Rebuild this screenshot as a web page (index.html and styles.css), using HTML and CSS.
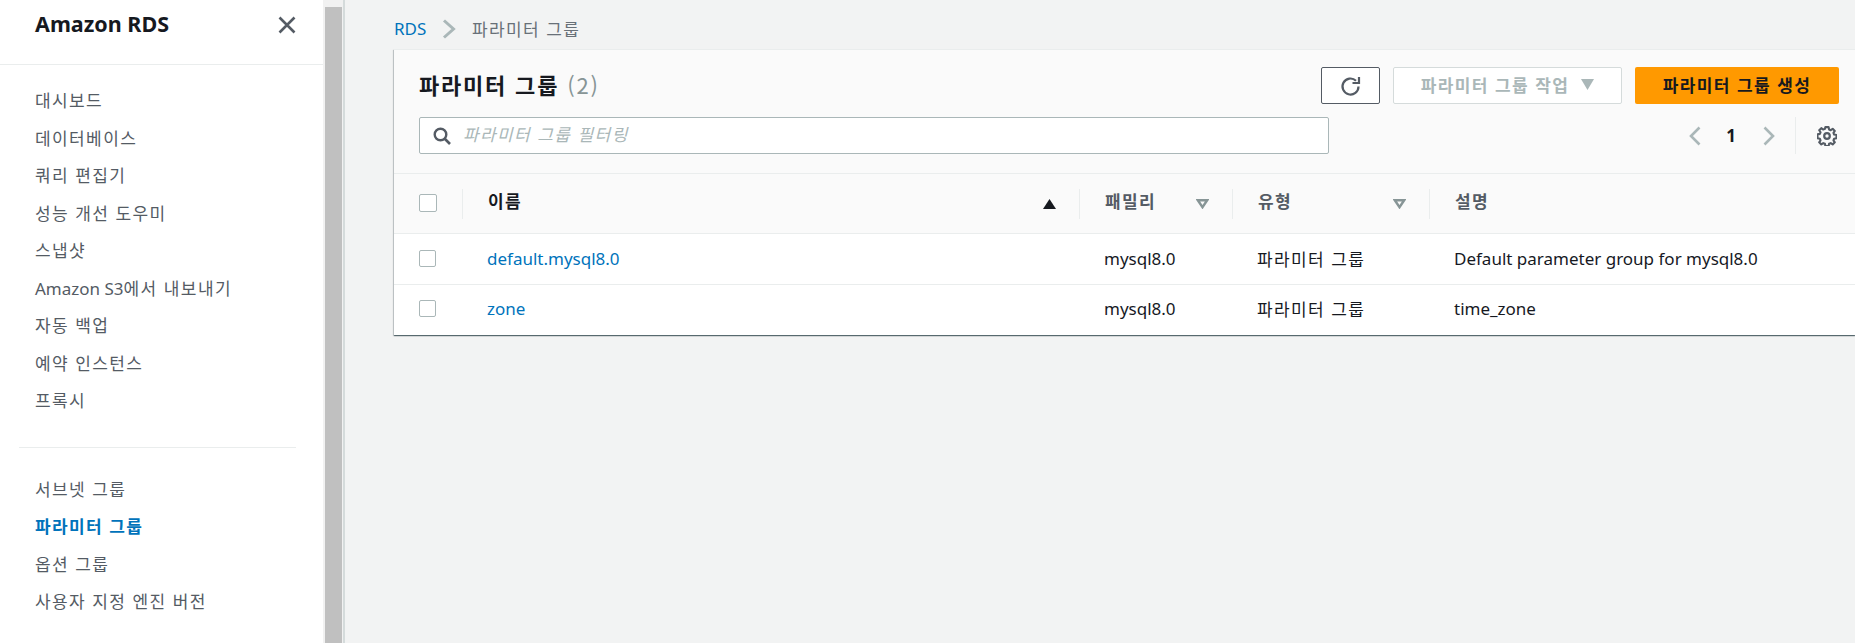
FILE: index.html
```html
<!DOCTYPE html>
<html lang="ko">
<head>
<meta charset="utf-8">
<title>파라미터 그룹</title>
<link rel="stylesheet" href="styles.css">
</head>
<body>
<div class="app">
  <aside class="sidebar">
    <div class="side-head">
      <span class="side-title">Amazon RDS</span>
      <svg class="close" width="20" height="20" viewBox="0 0 20 20"><path d="M2.500 2.500l15 15M17.500 2.500l-15 15" stroke="#545b64" stroke-width="2.600" fill="none"/></svg>
    </div>
    <nav class="nav nav-first">
      <a class="ko">대시보드</a>
      <a class="ko">데이터베이스</a>
      <a class="ko">쿼리 편집기</a>
      <a class="ko">성능 개선 도우미</a>
      <a class="ko">스냅샷</a>
      <a><span>Amazon S3</span><span class="ko">에서 내보내기</span></a>
      <a class="ko">자동 백업</a>
      <a class="ko">예약 인스턴스</a>
      <a class="ko">프록시</a>
    </nav>
    <div class="side-divider"></div>
    <nav class="nav">
      <a class="ko">서브넷 그룹</a>
      <a class="ko active">파라미터 그룹</a>
      <a class="ko">옵션 그룹</a>
      <a class="ko">사용자 지정 엔진 버전</a>
    </nav>
  </aside>
  <div class="scroll"><div class="thumb"></div></div>
  <main class="main">
    <div class="crumbs">
      <a class="crumb-link">RDS</a>
      <svg width="16" height="20" viewBox="0 0 16 20"><path d="M4 1.500l9.500 8.500L4 18.500" stroke="#aab7b8" stroke-width="3" fill="none"/></svg>
      <span class="ko crumb-cur">파라미터 그룹</span>
    </div>
    <section class="card">
      <div class="card-head">
        <div class="head-row">
          <h1 class="ko title">파라미터 그룹 <span class="count">(2)</span></h1>
          <div class="actions">
            <button class="btn btn-refresh"><svg width="22" height="22" viewBox="0 0 22 22"><path d="M18.500 11.500a8 8 0 1 1-2.500-5.800" stroke="#545b64" stroke-width="2.200" fill="none"/><path d="M19 2v6h-6.500" stroke="#545b64" stroke-width="2.200" fill="none"/></svg></button>
            <button class="btn btn-disabled"><span class="ko">파라미터 그룹 작업</span><svg width="13" height="11" viewBox="0 0 13 11"><path d="M0 0h13L6.500 11z" fill="#aab7b8"/></svg></button>
            <button class="btn btn-primary ko">파라미터 그룹 생성</button>
          </div>
        </div>
        <div class="tool-row">
          <div class="search">
            <svg width="18" height="18" viewBox="0 0 18 18"><circle cx="7.500" cy="7.500" r="5.800" stroke="#545b64" stroke-width="2.400" fill="none"/><path d="M11.500 11.500l5.500 5.500" stroke="#545b64" stroke-width="2.600"/></svg>
            <span class="ko placeholder">파라미터 그룹 필터링</span>
          </div>
          <div class="pager">
            <svg width="12" height="20" viewBox="0 0 12 20"><path d="M10.500 1.500L2 10l8.500 8.500" stroke="#aab7b8" stroke-width="2.600" fill="none"/></svg>
            <span class="page-num">1</span>
            <svg width="12" height="20" viewBox="0 0 12 20"><path d="M1.500 1.500L10 10l-8.500 8.500" stroke="#aab7b8" stroke-width="2.600" fill="none"/></svg>
            <span class="pager-sep"></span>
            <svg class="gear" width="20" height="20" viewBox="0 0 20 20"><path d="M8.300 1h3.400l.5 2.500 1.700.7 2.100-1.400 2.200 2.200-1.400 2.100.7 1.700 2.500.5v3.400l-2.500.5-.7 1.700 1.400 2.100-2.200 2.200-2.100-1.400-1.700.7-.5 2.500H8.300l-.5-2.500-1.700-.7-2.100 1.400-2.200-2.200 1.400-2.100-.7-1.700-2.500-.5V8.600l2.500-.5.7-1.700-1.400-2.100 2.200-2.200 2.100 1.400 1.700-.7z" transform="translate(.5 .2) scale(.95)" stroke="#545b64" stroke-width="2.200" fill="none" stroke-linejoin="round"/><circle cx="10" cy="10" r="2.800" stroke="#545b64" stroke-width="2.200" fill="none"/></svg>
          </div>
        </div>
      </div>
      <div class="grid-head row">
        <div class="cell cb-cell"><span class="cb cb-head"></span></div>
        <div class="cell sep name-head"><b class="ko th-dark">이름</b><svg width="13" height="10" viewBox="0 0 13 10"><path d="M6.500 0L13 10H0z" fill="#16191f"/></svg></div>
        <div class="cell sep"><b class="ko">패밀리</b><svg class="tri" width="13" height="10" viewBox="0 0 13 10"><path d="M1.800 1.200h9.400L6.500 8.200z" stroke="#879596" stroke-width="2.400" fill="none"/></svg></div>
        <div class="cell sep"><b class="ko">유형</b><svg class="tri" width="13" height="10" viewBox="0 0 13 10"><path d="M1.800 1.200h9.400L6.500 8.200z" stroke="#879596" stroke-width="2.400" fill="none"/></svg></div>
        <div class="cell sep"><b class="ko">설명</b></div>
      </div>
      <div class="row body-row">
        <div class="cell cb-cell"><span class="cb"></span></div>
        <div class="cell"><a class="link">default.mysql8.0</a></div>
        <div class="cell">mysql8.0</div>
        <div class="cell ko">파라미터 그룹</div>
        <div class="cell">Default parameter group for mysql8.0</div>
      </div>
      <div class="row body-row">
        <div class="cell cb-cell"><span class="cb"></span></div>
        <div class="cell"><a class="link">zone</a></div>
        <div class="cell">mysql8.0</div>
        <div class="cell ko">파라미터 그룹</div>
        <div class="cell">time_zone</div>
      </div>
    </section>
  </main>
</div>
</body>
</html>
```
FILE: styles.css
```css
* { box-sizing: border-box; }
html, body { margin: 0; height: 100%; overflow: hidden; }
body {
  font-family: "Noto Sans", "Noto Sans CJK KR", sans-serif;
  font-size: 17px;
  color: #16191f;
  background: #f2f3f3;
}
.ko { font-family: "Noto Sans CJK KR", sans-serif; letter-spacing: 1.400px; }
.app { display: flex; height: 643px; }
.sidebar { width: 323px; flex: none; background: #fff; }
.side-head {
  height: 65px;
  border-bottom: 1px solid #eaeded;
  padding: 6px 26px 0 35px;
  display: flex;
  justify-content: space-between;
  align-items: flex-start;
}
.side-title { font-size: 21.500px; font-weight: 700; line-height: 36px; }
.close { margin-top: 9px; }
.nav { display: flex; flex-direction: column; padding-left: 35px; }
.nav a { height: 37.5px; line-height: 37.5px; color: #545b64; white-space: nowrap; }
.nav-first { padding-top: 16px; }
.nav + .side-divider { margin: 28px 27px 22px 19px; border-top: 1px solid #eaeded; }
.nav a.active { color: #0073bb; font-weight: 700; }
.scroll { width: 22px; flex: none; background: #f1f1f1; border-right: 2px solid #d5dbdb; padding: 7px 1px 0 2px; }
.thumb { height: 100%; background: #c0c0c0; }
.main { flex: 1; min-width: 0; padding: 0 0 0 49px; }
.crumbs { height: 49px; display: flex; align-items: center; padding: 8px 0 0 0; color: #687078; }
.crumb-link { color: #0073bb; width: 46px; }
.crumbs svg { margin-right: 16px; }
.card { background: #fff; box-shadow: 0 1px 1px 0 rgba(0,28,36,.5), 1px 1px 1px 0 rgba(0,28,36,.15), -1px 1px 1px 0 rgba(0,28,36,.15); }
.card-head { background: #fafafa; height: 125px; border-bottom: 1px solid #eaeded; padding: 17px 16px 0 25px; border-top: 1px solid #eaeded; }
.head-row { display: flex; justify-content: space-between; height: 37px; }
.title { margin: 0; font-size: 22px; font-weight: 700; line-height: 35px; letter-spacing: 1.800px; }
.count { color: #879596; font-weight: 400; }
.actions { display: flex; gap: 13px; }
.btn { height: 37px; border-radius: 2px; font-size: 17px; font-weight: 700; display: flex; align-items: center; justify-content: center; padding: 0 0 2px; }
.btn-refresh { width: 59px; background: #fff; border: 1px solid #545b64; padding: 0; }
.btn-disabled { width: 229px; background: #fff; border: 1px solid #d5dbdb; color: #aab7b8; gap: 12px; }
.btn-primary { width: 204px; background: #ff9900; border: 0; color: #16191f; }
.tool-row { display: flex; justify-content: space-between; margin-top: 13px; }
.search { width: 910px; height: 37px; background: #fff; border: 1px solid #aab7b8; border-radius: 2px; display: flex; align-items: center; gap: 12px; padding-left: 13px; }
.placeholder { font-style: italic; color: #aab7b8; margin-top: -4px; }
.pager { display: flex; align-items: center; height: 37px; padding-right: 2px; }
.page-num { font-weight: 700; width: 26px; text-align: center; margin: 0 19px 0 17px; }
.pager-sep { width: 1px; height: 37px; background: #eaeded; margin: 0 21px 0 20px; }
.row { display: grid; grid-template-columns: 68px 617px 153px 197px 1fr; align-items: center; }
.grid-head { height: 60px; background: #fafafa; border-bottom: 1px solid #eaeded; }
.grid-head .cell { display: flex; align-items: center; justify-content: space-between; height: 30px; padding: 0 23px 0 25px; color: #545b64; }
.grid-head .sep { border-left: 1px solid #eaeded; }
.grid-head b { font-weight: 700; margin-top: -6px; }
.grid-head .th-dark { color: #16191f; }
.grid-head .cb-cell, .body-row .cb-cell { padding: 0 0 0 25px; }
.grid-head .cb-cell { padding-bottom: 2px; }
.grid-head .cell:last-child { justify-content: flex-start; }
.body-row { height: 51px; border-bottom: 1px solid #eaeded; padding-bottom: 1px; }
.body-row:last-child { height: 50px; border-bottom: 0; padding-bottom: 3px; }
.body-row .cell { padding-left: 25px; white-space: nowrap; }
.cb { display: block; width: 17px; height: 17px; background: #fff; border: 1px solid #aab7b8; border-radius: 2px; }
.cb-head { width: 18px; height: 18px; }
.link { color: #0073bb; }
```
